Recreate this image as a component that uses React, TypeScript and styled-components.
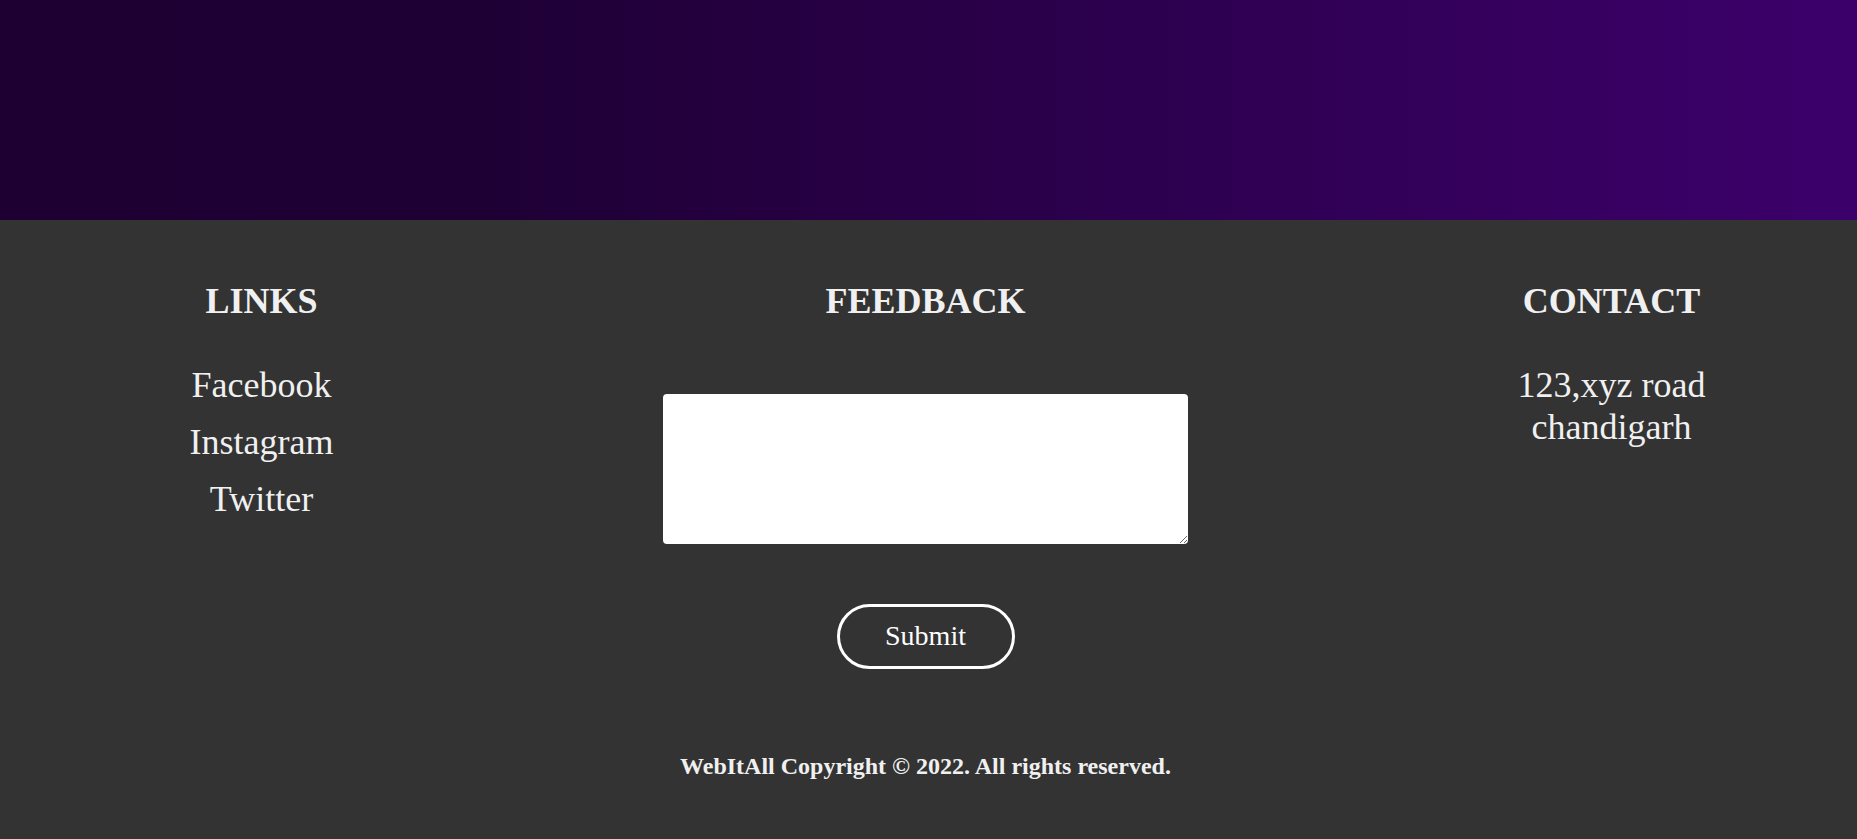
import React from "react";
import styled, { createGlobalStyle } from "styled-components";

const GlobalStyle = createGlobalStyle`
  html, body {
    margin: 0;
    padding: 0;
    background: #333333;
  }
  body {
    font-family: "Liberation Serif", "Times New Roman", serif;
    color: #f0f0f0;
  }
`;

const Hero = styled.header`
  height: 220px;
  background: linear-gradient(90deg, #1e0033 0%, #1e0034 25%, #3c006b 100%);
`;

const Footer = styled.footer`
  background: #333333;
  padding: 61px 0 50px 131.5px;
  display: grid;
  grid-template-columns: 260px 600px 304px;
  column-gap: 234px;
  align-items: start;
`;

const Column = styled.section`
  display: flex;
  flex-direction: column;
  align-items: center;
  text-align: center;
`;

const Heading = styled.h2`
  margin: 0;
  font-size: 36px;
  line-height: 41px;
  font-weight: 700;
  color: #f0f0f0;
`;

const LinkList = styled.ul`
  list-style: none;
  margin: 43px 0 0;
  padding: 0;
  display: flex;
  flex-direction: column;
  align-items: center;
  gap: 16px;
`;

const LinkItem = styled.li`
  font-size: 36px;
  line-height: 41px;
`;

const FooterLink = styled.a`
  color: #f0f0f0;
  text-decoration: none;
`;

const Address = styled.address`
  margin-top: 43px;
  font-style: normal;
  font-size: 36px;
  line-height: 41.5px;
  color: #f0f0f0;
`;

const FeedbackBox = styled.textarea`
  box-sizing: border-box;
  margin-top: 72px;
  width: 525px;
  height: 150px;
  border: none;
  border-radius: 4px;
  padding: 2px;
  background: #ffffff;
  font-family: "Liberation Serif", serif;
  font-size: 16px;
  outline: none;
`;

const SubmitButton = styled.button`
  box-sizing: border-box;
  margin-top: 60px;
  width: 178px;
  height: 65px;
  padding: 0 0 2px;
  border: 3px solid #ffffff;
  border-radius: 33px;
  background: transparent;
  color: #ffffff;
  font-family: "Liberation Serif", serif;
  font-size: 28px;
  cursor: pointer;
`;

const Copyright = styled.p`
  grid-column: 2;
  margin: 83px 0 0;
  text-align: center;
  font-size: 24px;
  line-height: 28px;
  font-weight: 700;
  color: #f0f0f0;
`;

export default function App() {
  return (
    <>
      <GlobalStyle />
      <Hero />
      <Footer>
        <Column>
          <Heading>LINKS</Heading>
          <LinkList>
            <LinkItem>
              <FooterLink href="#">Facebook</FooterLink>
            </LinkItem>
            <LinkItem>
              <FooterLink href="#">Instagram</FooterLink>
            </LinkItem>
            <LinkItem>
              <FooterLink href="#">Twitter</FooterLink>
            </LinkItem>
          </LinkList>
        </Column>
        <Column>
          <Heading>FEEDBACK</Heading>
          <FeedbackBox />
          <SubmitButton type="button">Submit</SubmitButton>
        </Column>
        <Column>
          <Heading>CONTACT</Heading>
          <Address>
            123,xyz road
            <br />
            chandigarh
          </Address>
        </Column>
        <Copyright>WebItAll Copyright © 2022. All rights reserved.</Copyright>
      </Footer>
    </>
  );
}
